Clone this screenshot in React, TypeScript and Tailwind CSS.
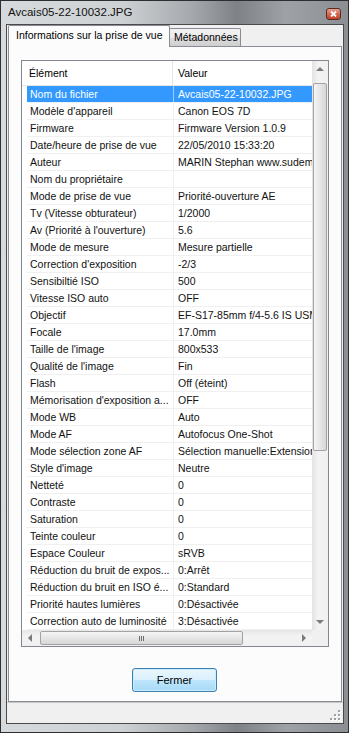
import React from "react";

const rows: [string, string][] = [
  ["Nom du fichier", "Avcais05-22-10032.JPG"],
  ["Modèle d'appareil", "Canon EOS 7D"],
  ["Firmware", "Firmware Version 1.0.9"],
  ["Date/heure de prise de vue", "22/05/2010 15:33:20"],
  ["Auteur", "MARIN Stephan www.sudemarin.com"],
  ["Nom du propriétaire", ""],
  ["Mode de prise de vue", "Priorité-ouverture AE"],
  ["Tv (Vitesse obturateur)", "1/2000"],
  ["Av (Priorité à l'ouverture)", "5.6"],
  ["Mode de mesure", "Mesure partielle"],
  ["Correction d'exposition", "-2/3"],
  ["Sensibiltié ISO", "500"],
  ["Vitesse ISO auto", "OFF"],
  ["Objectif", "EF-S17-85mm f/4-5.6 IS USM"],
  ["Focale", "17.0mm"],
  ["Taille de l'image", "800x533"],
  ["Qualité de l'image", "Fin"],
  ["Flash", "Off (éteint)"],
  ["Mémorisation d'exposition a...", "OFF"],
  ["Mode WB", "Auto"],
  ["Mode AF", "Autofocus One-Shot"],
  ["Mode sélection zone AF", "Sélection manuelle:Extension"],
  ["Style d'image", "Neutre"],
  ["Netteté", "0"],
  ["Contraste", "0"],
  ["Saturation", "0"],
  ["Teinte couleur", "0"],
  ["Espace Couleur", "sRVB"],
  ["Réduction du bruit de expos...", "0:Arrêt"],
  ["Réduction du bruit en ISO é...", "0:Standard"],
  ["Priorité hautes lumières", "0:Désactivée"],
  ["Correction auto de luminosité", "3:Désactivée"],
];

// small scrollbar arrow triangles
const Arrow = ({ dir }: { dir: "up" | "down" | "left" | "right" }) => {
  const pts = {
    up: "0,4 4,0 8,4",
    down: "0,0 8,0 4,4",
    left: "4,0 4,8 0,4",
    right: "0,0 4,4 0,8",
  }[dir];
  const horiz = dir === "up" || dir === "down";
  return (
    <svg width={horiz ? 8 : 4} height={horiz ? 4 : 8} viewBox={horiz ? "0 0 8 4" : "0 0 4 8"}>
      <polygon points={pts} fill="#7a7a7a" />
    </svg>
  );
};

const ListView = () => {
  return (
    <div className="w-[308px] h-[587px] border border-[#828790] bg-white flex flex-col">
      <div className="flex flex-1">
        {/* Main list area */}
        <div className="w-[290px] flex flex-col overflow-hidden">
          <div className="flex h-[25px] border-b border-[#e5e5e5] bg-white">
            <div className="w-[151px] pl-[7px] leading-[24px] border-r border-[#e5e5e5]">Élément</div>
            <div className="flex-1 pl-[5px] leading-[24px]">Valeur</div>
          </div>
          <div className="flex flex-col pl-[5px]">
            {rows.map(([k, v], i) => (
              <div
                key={i}
                className={`flex h-[17px] border-b border-[#f0f0f0] ${
                  i === 0 ? "text-white" : "text-[#111]"
                }`}
              >
                <div
                  className={`w-[146px] pl-[3px] leading-[16px] whitespace-nowrap overflow-hidden ${
                    i === 0 ? "bg-[#3399ff]" : ""
                  }`}
                >
                  {k}
                </div>
                <div className={`w-px ${i === 0 ? "bg-[#9ccbff]" : "bg-[#f0f0f0]"}`} />
                <div
                  className={`w-[138px] pl-[4px] leading-[16px] whitespace-nowrap overflow-hidden ${
                    i === 0 ? "bg-[#3399ff]" : ""
                  }`}
                >
                  {v}
                </div>
              </div>
            ))}
          </div>
        </div>
        {/* Vertical scrollbar */}
        <div className="w-[16px] flex flex-col bg-[linear-gradient(90deg,#e3e3e3,#f3f3f3_40%,#f0f0f0_100%)]">
          <div className="h-[16px] flex items-center justify-center">
            <Arrow dir="up" />
          </div>
          <div className="flex-1 flex flex-col pt-[6px] px-px">
            <div className="h-[368px] rounded-[2px] border border-[#a3a3a3] bg-[linear-gradient(90deg,#f5f5f5,#e6e6e6_50%,#d6d6d6)]" />
          </div>
          <div className="h-[16px] flex items-center justify-center">
            <Arrow dir="down" />
          </div>
        </div>
      </div>
      {/* Horizontal scrollbar */}
      <div className="flex h-[16px]">
        <div className="w-[290px] flex items-center bg-[linear-gradient(180deg,#e6e6e6,#f3f3f3_40%,#f0f0f0)]">
          <div className="w-[16px] flex items-center justify-center">
            <Arrow dir="left" />
          </div>
          <div className="ml-[2px] w-[203px] h-[14px] rounded-[2px] border border-[#a3a3a3] bg-[linear-gradient(180deg,#f5f5f5,#e6e6e6_50%,#d6d6d6)] flex items-center justify-center">
            <div className="flex gap-[1px]">
              <div className="w-px h-[5px] bg-[#6b6b6b]" />
              <div className="w-px h-[5px] bg-[#6b6b6b]" />
              <div className="w-px h-[5px] bg-[#6b6b6b]" />
            </div>
          </div>
          <div className="flex-1" />
          <div className="w-[16px] flex items-center justify-center">
            <Arrow dir="right" />
          </div>
        </div>
        <div className="flex-1 bg-[#f0f0f0]" />
      </div>
    </div>
  );
};

export default function App() {
  return (
    <div
      className="w-[349px] h-[733px] overflow-hidden border border-[#2e2e2e] flex flex-col bg-[linear-gradient(90deg,#d6dadd_0%,#cdd1d4_35%,#a5a9ad_55%,#7e8287_68%,#9ea2a6_82%,#8b8f93_100%)] text-[10.5px] text-black"
      style={{ fontFamily: '"Liberation Sans", Arial, sans-serif' }}
    >
      {/* Title bar */}
      <div className="h-[23px] flex items-start justify-between pl-[7px] pr-[7px]">
        <span className="mt-[3px] text-[11.5px] leading-[16px] text-[#111]">Avcais05-22-10032.JPG</span>
        <div className="mt-[7px] w-[15px] h-[12px] rounded-[3px] border border-[#5d2a22] bg-[linear-gradient(180deg,#e9a493,#d06a52_50%,#c2412a)] flex items-center justify-center">
          <svg width="7" height="6" viewBox="0 0 7 6">
            <path d="M1 0.5 L6 5.5 M6 0.5 L1 5.5" stroke="#ffffff" strokeWidth="1.8" />
          </svg>
        </div>
      </div>

      {/* Client area */}
      <div className="flex-1 ml-[5px] mr-[4px] mb-[8px] border border-[#4a4a4a] bg-[#f0f0f0] flex flex-col">
        {/* Tabs */}
        <div className="h-[21px] flex items-end pl-[1px]">
          <div className="relative z-10 -mb-px h-[22px] w-[162px] border border-b-0 border-[#898c95] rounded-t-[2px] bg-[#fcfcfc] pl-[7px] leading-[19px] text-[10.5px] whitespace-nowrap overflow-hidden">
            Informations sur la prise de vue
          </div>
          <div className="h-[18px] w-[72px] -ml-px border border-b-0 border-[#898c95] rounded-t-[2px] bg-[linear-gradient(180deg,#f2f2f2,#ebebeb_50%,#dddddd_51%,#cfcfcf)] pl-[4px] leading-[17px] text-[10.5px] whitespace-nowrap overflow-hidden">
            Métadonnées
          </div>
        </div>

        {/* Tab panel */}
        <div className="flex-1 mx-px border border-[#898c95] bg-[#fcfcfc] flex flex-col">
          <div className="mt-[13px] ml-[12px]">
            <ListView />
          </div>
          <div className="mt-[21px] flex justify-center pr-[1px]">
            <div className="w-[85px] h-[24px] rounded-[3px] border border-[#3c7fb1] bg-[linear-gradient(180deg,#eaf6fd,#d9f0fc_50%,#bee6fd_51%,#a7d9f5)] shadow-[inset_0_0_0_1px_#c9ecff] flex items-center justify-center text-[11px]">
              Fermer
            </div>
          </div>
        </div>

        {/* Status strip */}
        <div className="h-[21px] border-t border-[#c8c8c8] bg-[#f0f0f0] flex items-end justify-end pr-[2px] pb-[2px]">
          <svg width="11" height="11" viewBox="0 0 11 11">
            {[
              [8, 0],
              [8, 4],
              [4, 4],
              [8, 8],
              [4, 8],
              [0, 8],
            ].map(([x, y], i) => (
              <g key={i}>
                <rect x={x + 1} y={y + 1} width="2" height="2" fill="#ffffff" />
                <rect x={x} y={y} width="2" height="2" fill="#a0a0a0" />
              </g>
            ))}
          </svg>
        </div>
      </div>
    </div>
  );
}
